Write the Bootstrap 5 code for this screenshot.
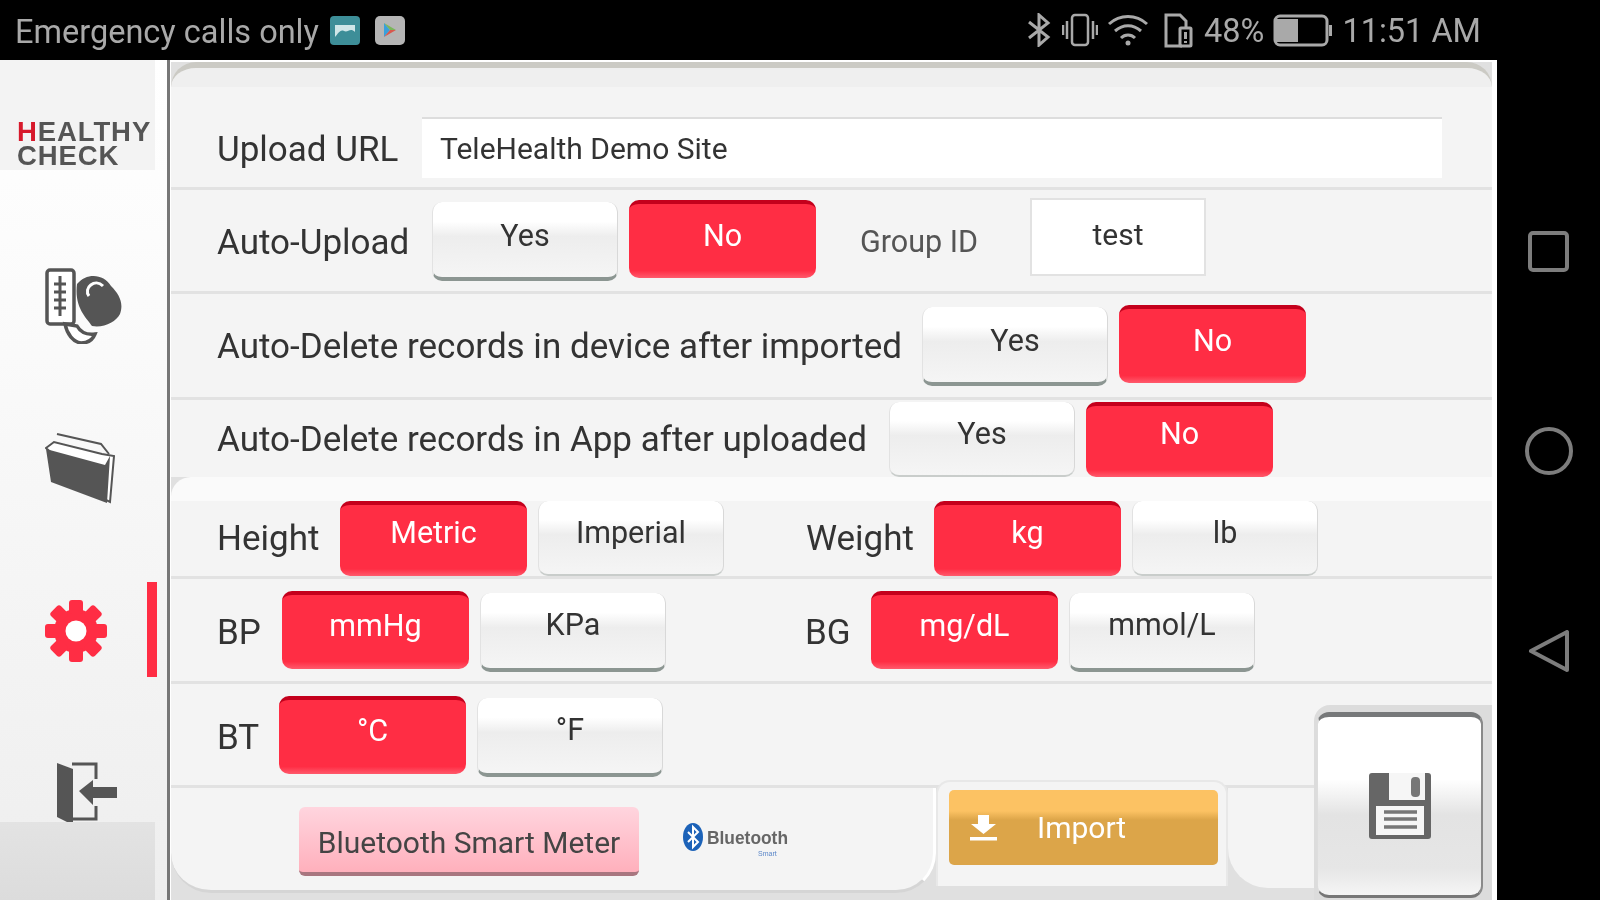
<!DOCTYPE html>
<html lang="en"><head><meta charset="utf-8"><title>Settings</title>
<link href="https://cdn.jsdelivr.net/npm/bootstrap@5.3.0/dist/css/bootstrap.min.css" rel="stylesheet">
<style>
html,body{margin:0;height:100%;background:#000;overflow:hidden}
.scr{width:1600px;height:900px;background:#000;font-family:Roboto,"Liberation Sans",sans-serif;filter:blur(.7px);color:#333}
.sbar{height:60px;color:#a9a9a9;font-size:32.5px;padding-left:15px}
.sbar svg{display:block;flex:none}
.sbar>span{padding-top:4px}
.sb-r{margin-left:auto;margin-right:119px;font-size:32.5px;white-space:nowrap}
.sb-r span{padding-top:3px}
.gap-a{margin-left:11px}.gap-b{margin-left:15px}.gap-c{margin-left:9px}.gap-d{margin-left:11px}.gap-e{margin-left:10px}
.bodyrow{height:840px}
.side{width:170px;flex:none;background:linear-gradient(#fff 0,#fafafa 35%,#eee 100%);border-right:3px solid #777;position:relative;height:840px}
.logo{height:110px;width:155px;background:#f3f3f3;padding:60px 0 0 17px;font:700 27.5px/24px "Liberation Sans",sans-serif;color:#555;letter-spacing:.9px}
.logo b{color:#d7192b}
.ico1{height:190px;padding-left:45px;padding-top:98px}
.ico2{height:162px;padding:72px 0 0 45px}
.ico3{height:160px;padding:78px 0 0 45px}
.ico4{padding:80px 0 0 57px}
.redbar{position:absolute;left:147px;top:522px;width:10px;height:95px;background:#ff2d44}
.foot{position:absolute;left:0;bottom:0;width:155px;height:78px;background:linear-gradient(#e3e3e3,#dcdcdc)}
.mainw{width:1327px;flex:none;background:#fff;position:relative;height:840px}
.pnl{width:1321px;height:840px;margin-left:1px;background:#e0e0e0;position:relative}
.topb{height:25px;background:#efefef;border-top:6px solid #cbcac4;border-radius:30px 30px 0 0;margin-top:2px}
.rw{padding-left:46px;background:#f4f4f4;border-bottom:3px solid #e2e2e2}
.r1{height:103px;padding-top:30px}
.r2{height:104px;padding-top:10px}
.r3{height:106px;padding-top:11px}
.r4{height:77px;padding-top:2px;border-bottom:0;overflow:hidden}
.band{height:24px;background:#fafafa;border-radius:20px 0 0 0}
.r5{height:78px;padding-top:0;overflow:hidden}
.r6{height:105px;padding-top:12px}
.r7{height:104px;padding-top:12px}
.lab{font-size:35px;line-height:40px;white-space:nowrap;color:#333}
.rw .lab{align-self:center;margin-top:-6px}
.r1 .lab{margin-top:-4px}
.r3 .lab{margin-top:-8px}
.r4 .lab,.r5 .lab{margin-top:0}
.w-up{width:205px}.w-au{width:215px}.w-ad{width:705px}.w-aa{width:672px}.w-he{width:123px}.w-bp{width:65px}.w-bt{width:62px}
.w-we{width:128px}.w-bg{width:66px}
.inp{width:1020px;height:61px;background:#fff;border-top:2px solid #ddd;font-size:30px;line-height:60px;padding-left:18px;color:#333}
.tbtn{width:186px;height:79px;border:0;border-radius:10px;font-size:30.5px;line-height:1;padding:0 0 11px;flex:none;font-family:inherit}
.twhite{background:linear-gradient(#fff 0,#fff 26%,#ededed 46%,#f5f5f5 100%);color:#333;border-bottom:4px solid #8c9692;border-left:1px solid #e2e2e2;border-right:1px solid #d8d8d8;margin-top:2px}
.tred{background:linear-gradient(#ff2d44 0,#ff2d44 90%,#ff5a6c 100%);color:#fff;border-top:4px solid #c4001c;width:187px;height:78px;padding-bottom:12px}
.tred:hover,.tred:focus{color:#fff;background:#ff2d44;border-top:4px solid #c4001c}
.twhite:hover,.twhite:focus{background:#f5f5f5;color:#333;border-bottom:4px solid #8c9692}
.r2 .twhite,.r3 .twhite{padding-bottom:7px}
.r2 .tred,.r3 .tred{padding-bottom:9px}
.g11{margin-left:11px}
.low{height:75px;margin-top:0}
.twhite.low{padding-bottom:8px;border-bottom:2px solid #c9cdcb}
.tred.low{padding-bottom:14px}
.rw .gid{font-size:30.5px;color:#555;margin-left:44px;width:170px;margin-top:-7px}
.gbox{width:176px;height:78px;margin-top:-2px;background:#fff;border:2px solid #e2e2e2;text-align:center;font-size:30px;line-height:70px;color:#333}
.sp-w{margin-left:82px}.sp-b{margin-left:139px}
.r8w{height:113px;background:#e0e0e0}
.r8l{width:765px;height:105px;background:#f4f4f4;border-bottom:3px solid #d5d5d5;border-right:3px solid #fff;border-radius:0 0 40px 40px;padding:19px 0 0 128px}
.bsm{width:340px;height:69px;border:0;border-bottom:4px solid #a8767f;border-radius:6px;background:linear-gradient(#ffd5de 0,#ffc4cf 45%,#ffb0bc 100%);font-size:30px;color:#444;padding:5px 0 0;font-family:inherit;flex:none}
.bsm:hover,.bsm:focus{background:#ffc4cf;color:#444;border-bottom:4px solid #a8767f}
.btl{margin-left:44px;margin-top:16px}
.tab{width:292px;height:106px;margin-top:-8px;background:#f4f4f4;border:2px solid #e8e8e8;border-bottom:0;border-radius:14px 14px 0 0;padding:8px 0 0 11px}
.imp{width:269px;height:75px;border:0;border-radius:5px;background:linear-gradient(#fcc263 0,#fcc263 28%,#dca549 40%,#dca549 100%);color:#fff;font-size:30px;font-family:inherit;padding:0 0 0 21px}
.imp:hover,.imp:focus{color:#fff;background:#dca549}
.imp span{margin-left:40px}
.r8r{width:92px;height:100px;background:#f4f4f4;border-radius:0 0 0 40px}
.well{position:absolute;right:0;top:643px;width:178px;height:197px;background:#dcdcdc;border-radius:16px 0 0 0;padding:7px 0 0 3px}
.savebtn{width:166px;height:186px;border:0;border-top:5px solid #77797a;border-right:2px solid #8a8a8a;border-bottom:3px solid #777;border-left:1px solid #ddd;border-radius:12px;background:linear-gradient(#fff 0,#fff 35%,#e3e3e3 55%,#e6e6e6 85%,#f5f5f5 100%);padding:0}
.savebtn:hover,.savebtn:focus{background:#e8e8e8}
.nav3{width:103px;flex:none}
.nav3 svg{display:block;margin-left:31px}
.n1{margin-top:171px}
.nav3 .n2{margin-top:155px;margin-left:28px}
.n3{margin-top:155px}
</style></head><body>
<div class="scr d-flex flex-column">
 <div class="sbar d-flex align-items-center">
  <span>Emergency calls only</span>
  <svg class="gap-a" width="30" height="29" viewBox="0 0 30 29"><rect width="30" height="29" rx="4" fill="#3d8e98"/><path d="M5 21V9h20v7c-5-5-7 1-11-1s-6 3-9 6z" fill="#cfe6e8"/></svg>
  <svg class="gap-b" width="30" height="29" viewBox="0 0 30 29"><rect width="30" height="29" rx="5" fill="#b5b5b5"/><path d="M9 7l6 7-6 7z" fill="#3aa0dc"/><path d="M9 7l12 7-6 0z" fill="#7ab65a"/><path d="M9 21l12-7-6 0z" fill="#d8584e"/></svg>
  <div class="sb-r d-flex align-items-center">
   <svg width="24" height="34" viewBox="0 0 24 34" fill="none" stroke="#a9a9a9" stroke-width="3"><path d="M2 9l19 15-9 8V2l9 8L2 25"/></svg>
   <svg class="gap-d" width="36" height="34" viewBox="0 0 36 34" fill="none" stroke="#a9a9a9" stroke-width="2.5"><rect x="10" y="2" width="16" height="30" rx="3"/><path d="M5 8v18M1 12v10M31 8v18M35 12v10"/></svg>
   <svg class="gap-c" width="42" height="34" viewBox="0 0 42 34" fill="none" stroke="#a9a9a9" stroke-width="3"><path d="M2 11c11-10 27-10 38 0M8 18c8-7 18-7 26 0M14 25c4-4 10-4 14 0"/><circle cx="21" cy="30" r="2.5" fill="#a9a9a9" stroke="none"/></svg>
   <svg class="gap-b" width="29" height="35" viewBox="0 0 29 35" fill="none" stroke="#a9a9a9" stroke-width="3"><path d="M18 33H2V2h14l6 6v6"/><rect x="16" y="15" width="11" height="18" rx="1"/><path d="M21.500 19v7M21.500 28v2"/></svg>
   <span class="gap-d">48%</span>
   <svg class="gap-c" width="60" height="33" viewBox="0 0 60 33"><rect x="2" y="2" width="52" height="29" rx="5" fill="none" stroke="#a9a9a9" stroke-width="3"/><rect x="3" y="5" width="22" height="23" fill="#a9a9a9"/><rect x="56" y="11" width="3" height="11" fill="#a9a9a9"/></svg>
   <span class="gap-c">11:51 AM</span>
  </div>
 </div>
 <div class="bodyrow d-flex">
  <div class="side">
   <div class="logo"><b>H</b>EALTHY<br>CHECK</div>
   <div class="ico1"><svg width="78" height="76" viewBox="0 0 78 76"><rect x="2" y="2" width="27" height="54" rx="3" fill="#fff" stroke="#555" stroke-width="3.500"/><path d="M15 8v40M9 16h12M9 24h12M9 32h12M9 40h12" stroke="#555" stroke-width="3" fill="none"/><path d="M32 16c10-12 27-10 34 2 8 8 13 17 9 28-4 8-16 14-28 12-5-8-18-18-15-42z" fill="#555"/><path d="M44 28c-6-8 6-18 14-10" fill="none" stroke="#fff" stroke-width="3"/><path d="M20 56c2 10 8 18 16 19 8 0 12-4 14-9-8 1-14-1-18-8z" fill="#fff" stroke="#555" stroke-width="3.500"/></svg></div>
   <div class="ico2"><svg width="72" height="72" viewBox="0 0 72 72"><path d="M12 2l44 10 8 10" fill="none" stroke="#555" stroke-width="2"/><path d="M1 16l8-6 48 12 12 2-4 46-8-4z" fill="#fff" stroke="#555" stroke-width="2"/><path d="M1 17l59 16 5-9-3 47L6 50z" fill="#555"/></svg></div>
   <div class="ico3"><svg width="62" height="62" viewBox="0 0 62 62"><g fill="#ff2d44"><circle cx="31" cy="31" r="22"/><rect x="24" y="0" width="14" height="14" rx="3"/><rect x="24" y="48" width="14" height="14" rx="3"/><rect x="0" y="24" width="14" height="14" rx="3"/><rect x="48" y="24" width="14" height="14" rx="3"/><g transform="rotate(45 31 31)"><rect x="24" y="0" width="14" height="14" rx="3"/><rect x="24" y="48" width="14" height="14" rx="3"/><rect x="0" y="24" width="14" height="14" rx="3"/><rect x="48" y="24" width="14" height="14" rx="3"/></g></g><circle cx="31" cy="31" r="10.500" fill="#fff"/></svg></div>
   <div class="ico4"><svg width="60" height="64" viewBox="0 0 60 64"><path d="M15 2h24v15M39 44v13H16" fill="none" stroke="#555" stroke-width="3"/><path d="M0 1l16 6v56L0 55z" fill="#555"/><path d="M22 29l14-11v7h24v11H36v7z" fill="#555"/></svg></div>
   <div class="redbar"></div>
   <div class="foot"></div>
  </div>
  <div class="mainw">
   <div class="pnl">
    <div class="topb"></div>
    <div class="rw r1 d-flex align-items-start"><span class="lab w-up">Upload URL</span><div class="inp">TeleHealth Demo Site</div></div>
    <div class="rw r2 d-flex align-items-start"><span class="lab w-au">Auto-Upload</span><button class="btn tbtn twhite" type="button">Yes</button><button class="btn tbtn tred g11" type="button">No</button><span class="lab gid">Group ID</span><div class="gbox">test</div></div>
    <div class="rw r3 d-flex align-items-start"><span class="lab w-ad">Auto-Delete records in device after imported</span><button class="btn tbtn twhite" type="button">Yes</button><button class="btn tbtn tred g11" type="button">No</button></div>
    <div class="rw r4 d-flex align-items-start"><span class="lab w-aa">Auto-Delete records in App after uploaded</span><button class="btn tbtn twhite low" type="button">Yes</button><button class="btn tbtn tred low g11" type="button">No</button></div>
    <div class="band"></div>
    <div class="rw r5 d-flex align-items-start"><span class="lab w-he">Height</span><button class="btn tbtn tred low" type="button">Metric</button><button class="btn tbtn twhite low g11" type="button">Imperial</button><span class="lab w-we sp-w">Weight</span><button class="btn tbtn tred low" type="button">kg</button><button class="btn tbtn twhite low g11" type="button">lb</button></div>
    <div class="rw r6 d-flex align-items-start"><span class="lab w-bp">BP</span><button class="btn tbtn tred" type="button">mmHg</button><button class="btn tbtn twhite g11" type="button">KPa</button><span class="lab w-bg sp-b">BG</span><button class="btn tbtn tred" type="button">mg/dL</button><button class="btn tbtn twhite g11" type="button">mmol/L</button></div>
    <div class="rw r7 d-flex align-items-start"><span class="lab w-bt">BT</span><button class="btn tbtn tred" type="button">°C</button><button class="btn tbtn twhite g11" type="button">°F</button></div>
    <div class="r8w d-flex align-items-start">
     <div class="r8l d-flex align-items-start"><button class="btn bsm" type="button">Bluetooth Smart Meter</button>
      <svg class="btl" width="125" height="36" viewBox="0 0 125 36"><ellipse cx="10" cy="14" rx="10" ry="14" fill="#1c62b8"/><path d="M5 9l10 10-5 5V4l5 5-10 10" fill="none" stroke="#fff" stroke-width="2"/><text x="24" y="21" font-family="Liberation Sans,sans-serif" font-weight="700" font-size="18" textLength="81" lengthAdjust="spacingAndGlyphs" fill="#666">Bluetooth</text><text x="75" y="33" font-family="Liberation Sans,sans-serif" font-size="7" fill="#5a86c8">Smart</text></svg>
     </div>
     <div class="tab"><button class="btn imp d-flex align-items-center" type="button"><svg width="27" height="26" viewBox="0 0 27 26" fill="#fff"><path d="M8 0h11v9h7L13.500 19 1 9h7z"/><rect y="22" width="27" height="3.500"/></svg><span>Import</span></button></div>
     <div class="r8r"></div>
    </div>
    <div class="well"><button class="btn savebtn d-flex align-items-center justify-content-center" type="button"><svg width="62" height="66" viewBox="0 0 62 66"><path d="M3 0h56a3 3 0 0 1 3 3v60a3 3 0 0 1-3 3H3a3 3 0 0 1-3-3V3a3 3 0 0 1 3-3z" fill="#666"/><path d="M20 0h36v27H20z" fill="#f6f6f6"/><rect x="42" y="4" width="9" height="20" rx="4" fill="#777"/><rect x="7" y="33" width="48" height="29" fill="#f6f6f6"/><path d="M15 39h33M15 46h33M15 54h33" stroke="#777" stroke-width="3.500"/></svg></button></div>
   </div>
  </div>
  <div class="nav3 d-flex flex-column">
   <svg class="n1" width="41" height="41" viewBox="0 0 41 41" fill="none" stroke="#7d7d7d" stroke-width="4"><rect x="2" y="2" width="37" height="37" rx="3"/></svg>
   <svg class="n2" width="48" height="48" viewBox="0 0 48 48" fill="none" stroke="#7d7d7d" stroke-width="4"><circle cx="24" cy="24" r="22"/></svg>
   <svg class="n3" width="42" height="42" viewBox="0 0 42 42" fill="none" stroke="#7d7d7d" stroke-width="4" stroke-linejoin="round"><path d="M39 2v38L3 21z"/></svg>
  </div>
 </div>
</div>
</body></html>
